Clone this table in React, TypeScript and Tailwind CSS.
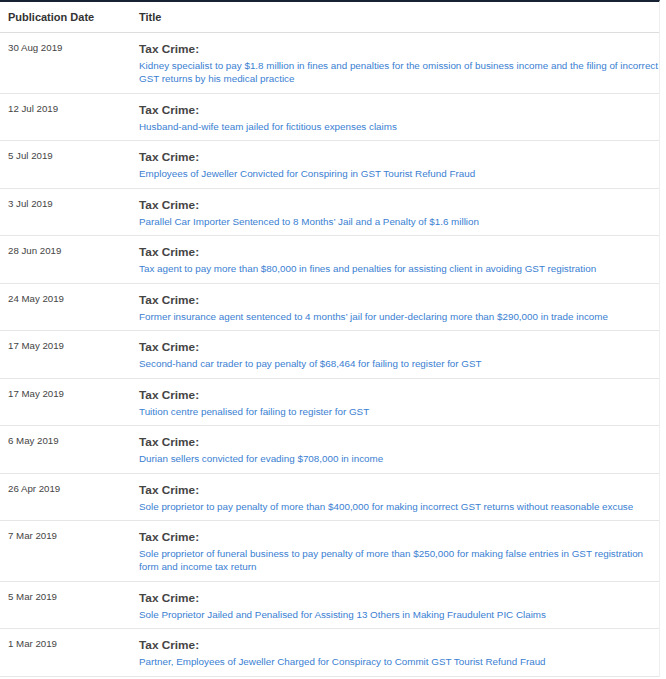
const rows: { date: string; title: string }[] = [
  {
    date: '30 Aug 2019',
    title:
      'Kidney specialist to pay $1.8 million in fines and penalties for the omission of business income and the filing of incorrect GST returns by his medical practice',
  },
  { date: '12 Jul 2019', title: 'Husband-and-wife team jailed for fictitious expenses claims' },
  { date: '5 Jul 2019', title: 'Employees of Jeweller Convicted for Conspiring in GST Tourist Refund Fraud' },
  { date: '3 Jul 2019', title: 'Parallel Car Importer Sentenced to 8 Months’ Jail and a Penalty of $1.6 million' },
  {
    date: '28 Jun 2019',
    title: 'Tax agent to pay more than $80,000 in fines and penalties for assisting client in avoiding GST registration',
  },
  {
    date: '24 May 2019',
    title: 'Former insurance agent sentenced to 4 months’ jail for under-declaring more than $290,000 in trade income',
  },
  { date: '17 May 2019', title: 'Second-hand car trader to pay penalty of $68,464 for failing to register for GST' },
  { date: '17 May 2019', title: 'Tuition centre penalised for failing to register for GST' },
  { date: '6 May 2019', title: 'Durian sellers convicted for evading $708,000 in income' },
  {
    date: '26 Apr 2019',
    title: 'Sole proprietor to pay penalty of more than $400,000 for making incorrect GST returns without reasonable excuse',
  },
  {
    date: '7 Mar 2019',
    title:
      'Sole proprietor of funeral business to pay penalty of more than $250,000 for making false entries in GST registration form and income tax return',
  },
  { date: '5 Mar 2019', title: 'Sole Proprietor Jailed and Penalised for Assisting 13 Others in Making Fraudulent PIC Claims' },
  { date: '1 Mar 2019', title: 'Partner, Employees of Jeweller Charged for Conspiracy to Commit GST Tourist Refund Fraud' },
];

/* ── One table row ── */

function Row({ date, title }: { date: string; title: string }) {
  return (
    <div className="flex border-b border-[#e6e6e6]">
      <div className="w-[131px] shrink-0 pl-2 pt-2 text-[9.7px] leading-[13px] text-[#444]">{date}</div>
      <div className="flex-1 pl-2 pr-0 pt-2 pb-[7.5px]">
        <div className="text-[11.8px] font-bold leading-[16px] text-[#444]">Tax Crime:</div>
        <a href="#" className="mt-[2px] block text-[9.84px] leading-[13px] text-[#3a80d2]">
          {title}
        </a>
      </div>
    </div>
  );
}

export default function App() {
  return (
    <div className="h-[679px] w-[666px] overflow-hidden bg-white font-['Liberation_Sans',Arial,sans-serif]">
      <div className="w-[660px] border-r border-[#eeeeee] border-t-2 border-t-[#162234]">
        <div className="flex h-[31px] items-center border-b border-[#dddddd] text-[11px] font-bold text-[#333]">
          <div className="w-[131px] shrink-0 pl-2">Publication Date</div>
          <div className="pl-2">Title</div>
        </div>
        {rows.map((r, i) => (
          <Row key={i} date={r.date} title={r.title} />
        ))}
      </div>
    </div>
  );
}
